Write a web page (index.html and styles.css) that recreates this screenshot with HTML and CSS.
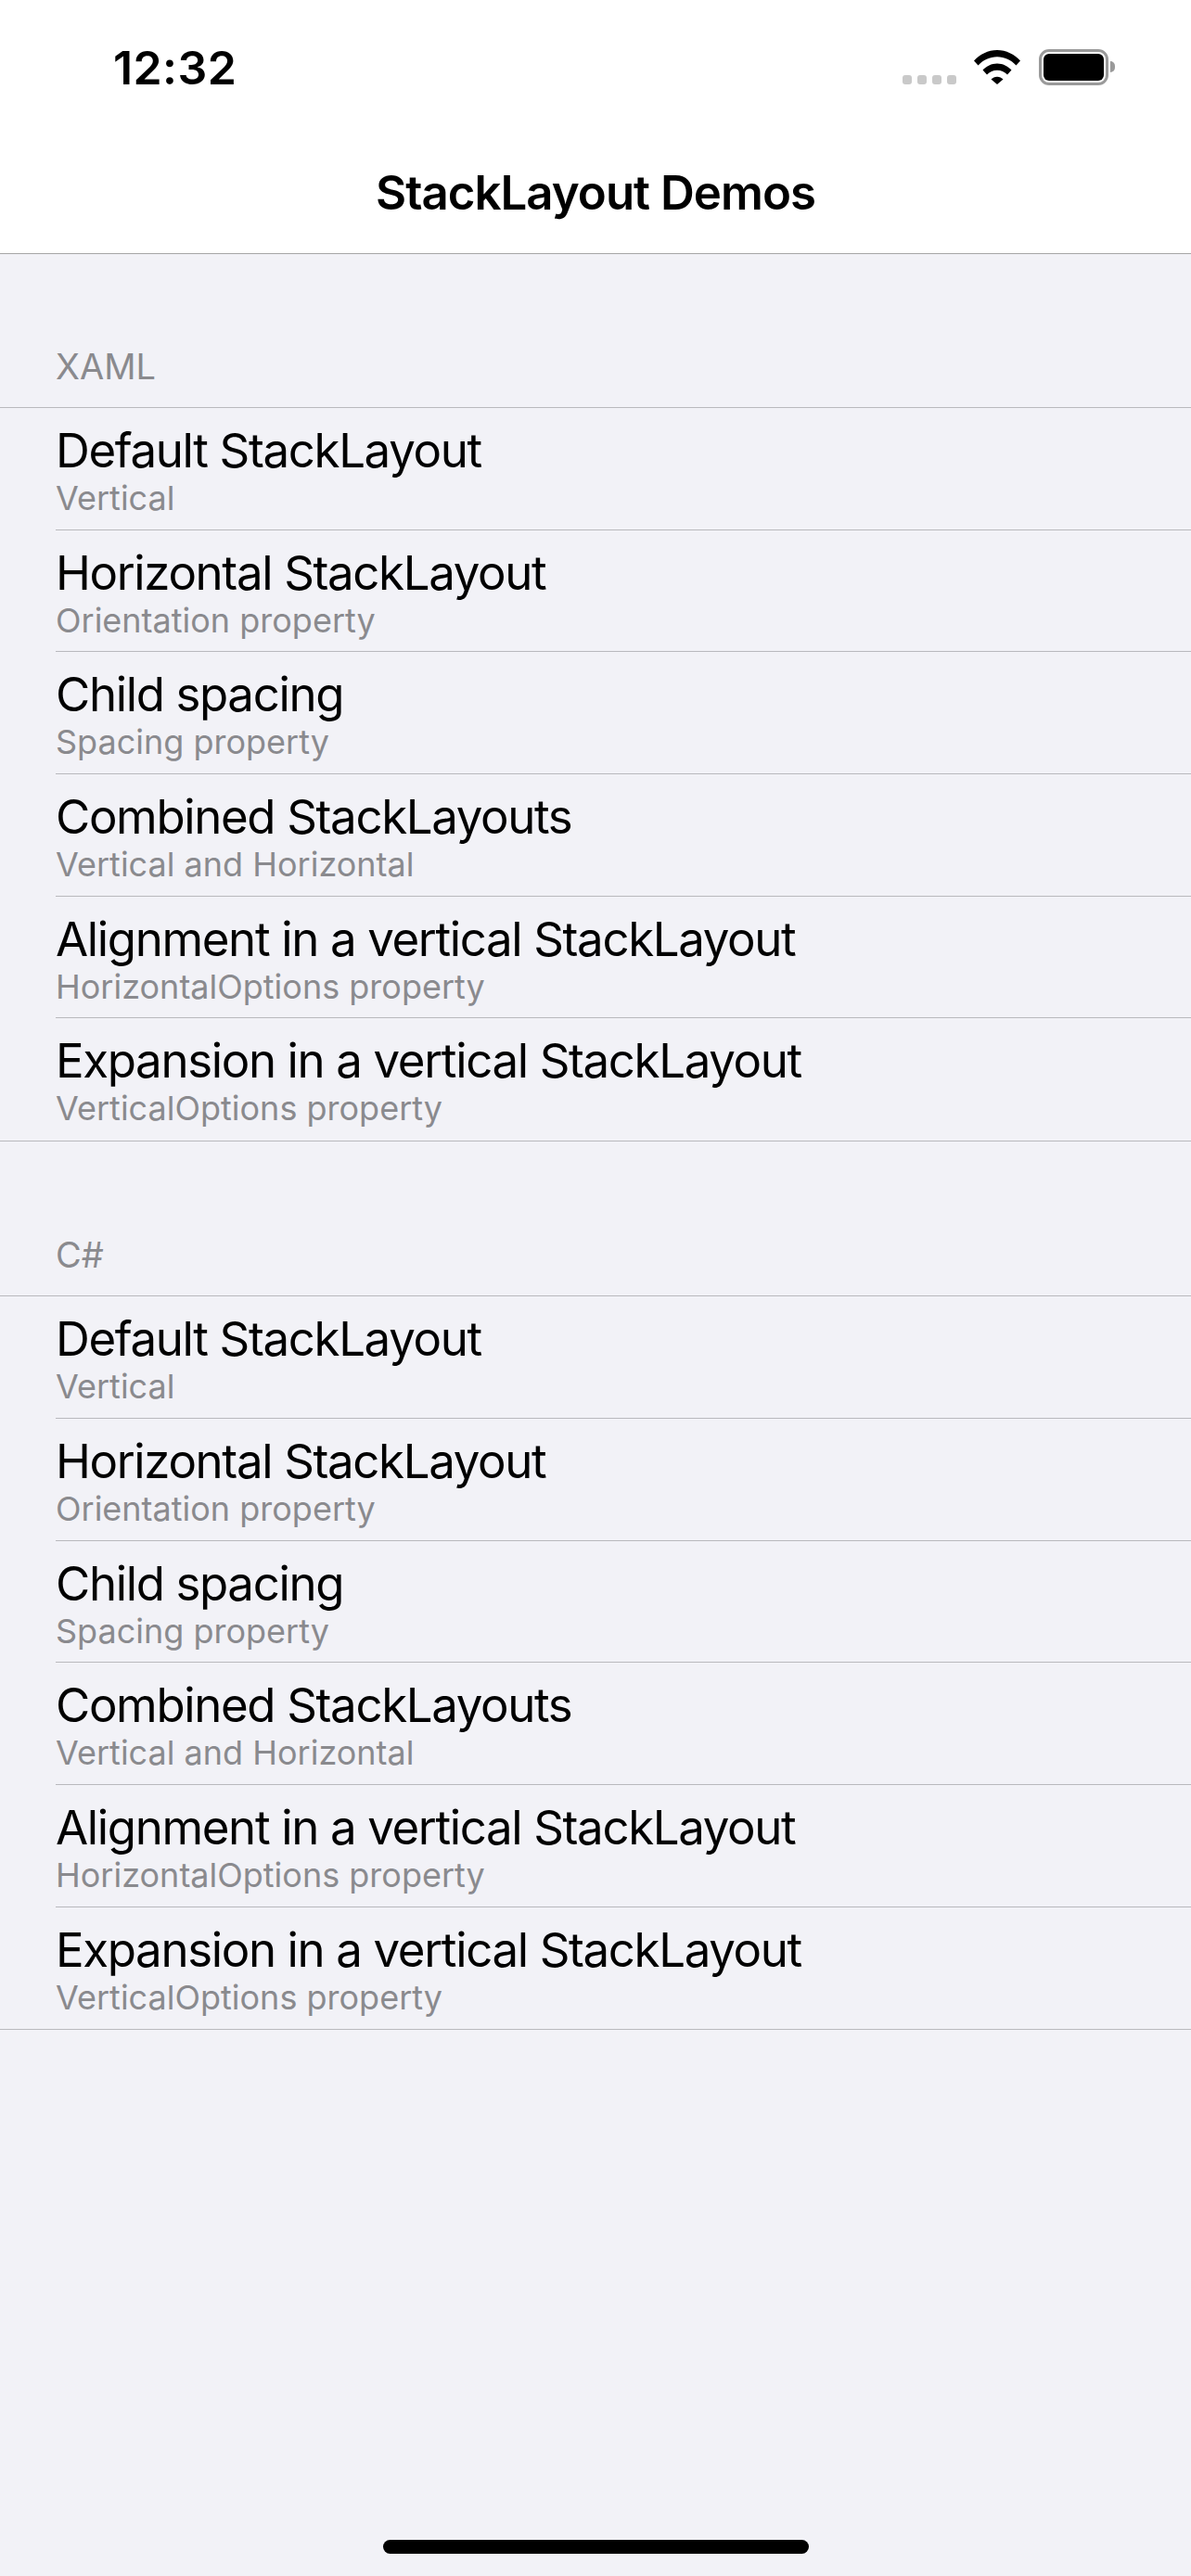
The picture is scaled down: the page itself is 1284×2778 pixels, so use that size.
FILE: index.html
```html
<!DOCTYPE html>
<html lang="en">
<head>
  <meta charset="UTF-8">
  <title>StackLayout Demos</title>
  <link rel="stylesheet" href="styles.css">
</head>
<body>
  <header class="top">
    <div class="status">
      <span class="time">12:32</span>
      <div class="status-icons">
        <div class="dots"><i></i><i></i><i></i><i></i></div>
        <svg class="wifi" width="50" height="37" viewBox="0 0 50 37">
          <path d="M0 11.5C6.5 4.6 15.2 0 25 0s18.500 4.600 25 11.500l-4.500 5C40 10.800 33 7.300 25 7.300S10 10.800 4.500 16.500z"/>
          <path d="M9.500 21.500C13.500 17.300 19 14.500 25 14.500s11.500 2.800 15.500 7l-4.500 5C33 23.600 29.200 21.800 25 21.800s-8 1.800-11 4.700z"/>
          <path d="M18.500 31.500c1.700-1.700 4-2.800 6.500-2.800s4.800 1.100 6.500 2.800L25 37z"/>
        </svg>
        <div class="battery"><div class="battery-fill"></div></div>
      </div>
    </div>
    <h1 class="nav-title">StackLayout Demos</h1>
  </header>

  <main>
    <section class="group">
      <h2 class="group-title">XAML</h2>
      <ul class="list">
        <li><span class="item-title">Default StackLayout</span><span class="item-sub">Vertical</span></li>
        <li><span class="item-title">Horizontal StackLayout</span><span class="item-sub">Orientation property</span></li>
        <li><span class="item-title">Child spacing</span><span class="item-sub">Spacing property</span></li>
        <li><span class="item-title">Combined StackLayouts</span><span class="item-sub">Vertical and Horizontal</span></li>
        <li><span class="item-title">Alignment in a vertical StackLayout</span><span class="item-sub">HorizontalOptions property</span></li>
        <li><span class="item-title">Expansion in a vertical StackLayout</span><span class="item-sub">VerticalOptions property</span></li>
      </ul>
    </section>

    <section class="group">
      <h2 class="group-title">C#</h2>
      <ul class="list">
        <li><span class="item-title">Default StackLayout</span><span class="item-sub">Vertical</span></li>
        <li><span class="item-title">Horizontal StackLayout</span><span class="item-sub">Orientation property</span></li>
        <li><span class="item-title">Child spacing</span><span class="item-sub">Spacing property</span></li>
        <li><span class="item-title">Combined StackLayouts</span><span class="item-sub">Vertical and Horizontal</span></li>
        <li><span class="item-title">Alignment in a vertical StackLayout</span><span class="item-sub">HorizontalOptions property</span></li>
        <li><span class="item-title">Expansion in a vertical StackLayout</span><span class="item-sub">VerticalOptions property</span></li>
      </ul>
    </section>
  </main>

  <div class="home-bar"></div>
</body>
</html>
```

FILE: styles.css
```css
* {
  box-sizing: border-box;
}

html, body {
  height: 100%;
}

body {
  margin: 0;
  height: 2778px;
  background-color: #f2f2f7;
  font-family: Inter, "Liberation Sans", sans-serif;
  color: #000;
  position: relative;
  overflow: hidden;
}

.top {
  height: 274px;
  background: #fff;
  border-bottom: 1px solid #a6a6a6;
}

.status {
  height: 177px;
  padding: 45px 89px 0 122px;
  display: flex;
  justify-content: space-between;
  align-items: flex-start;
}

.time {
  font-size: 50px;
  line-height: 56px;
  font-weight: 600;
  letter-spacing: 0.4px;
}

.status-icons {
  display: flex;
  align-items: flex-end;
  margin-top: 8px;
}

.dots {
  display: flex;
  gap: 6px;
  margin: 0 19px 1px 0;
}

.dots i {
  width: 10px;
  height: 10px;
  border-radius: 3px;
  background: #c9c9c9;
}

.wifi {
  display: block;
  margin-bottom: 1px;
}

.battery {
  width: 75px;
  height: 39px;
  margin-left: 20px;
  padding: 2px;
  border: 3px solid #9a9a9a;
  border-radius: 11px;
  position: relative;
}

.battery::after {
  content: "";
  position: absolute;
  right: -10px;
  top: 10px;
  width: 5px;
  height: 12px;
  background: #9a9a9a;
  border-radius: 0 5px 5px 0;
}

.battery-fill {
  height: 100%;
  background: #000;
  border-radius: 6px;
}

.nav-title {
  margin: 0;
  text-align: center;
  font-size: 51px;
  line-height: 62px;
  font-weight: 600;
  letter-spacing: -1px;
}

.group {
  padding-top: 81px;
}

.group-title {
  margin: 0;
  height: 85px;
  padding: 17px 0 0 60px;
  font-size: 38px;
  line-height: 46px;
  font-weight: 400;
  color: #8a8a8e;
  border-bottom: 1px solid #b9b9bd;
}

.list {
  list-style: none;
  margin: 0 0 1px;
  padding: 0;
  border-bottom: 1px solid #b9b9bd;
}

.list li {
  height: 131.7px;
  margin-left: 60px;
  padding-top: 16px;
  border-bottom: 1px solid #b9b9bd;
}

.list li:last-child {
  border-bottom: none;
}

.item-title {
  display: block;
  font-size: 51px;
  line-height: 60px;
  letter-spacing: -1.37px;
}

.item-sub {
  display: block;
  font-size: 36px;
  line-height: 42px;
  color: #8a8a8e;
}

.home-bar {
  position: absolute;
  left: 413px;
  top: 2739px;
  width: 459px;
  height: 15px;
  border-radius: 8px;
  background: #000;
}
```
